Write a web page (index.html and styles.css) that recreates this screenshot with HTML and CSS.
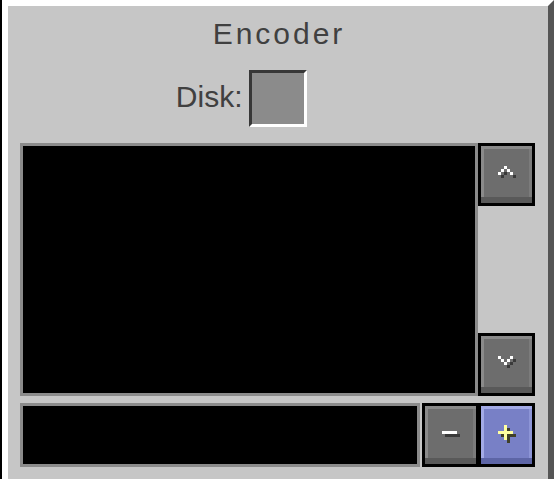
FILE: index.html
```html
<!DOCTYPE html>
<html lang="en">
<head>
<meta charset="utf-8">
<title>Encoder</title>
<link rel="stylesheet" href="styles.css">
</head>
<body>
<div class="frame">
  <div class="panel">
    <h1 class="title">Encoder</h1>
    <div class="disk-row">
      <span class="disk-label">Disk:</span>
      <div class="slot"></div>
      <span class="spacer"></span>
    </div>
    <div class="main">
      <div class="screen"></div>
      <div class="scroll">
        <button class="btn-outlined" aria-label="Scroll up">
          <svg class="icon" width="18" height="12" viewBox="0 0 6 4" shape-rendering="crispEdges">
            <g fill="#3a3a3a"><rect x="3" y="1" width="1" height="1"/><rect x="2" y="2" width="1" height="1"/><rect x="4" y="2" width="1" height="1"/><rect x="1" y="3" width="1" height="1"/><rect x="5" y="3" width="1" height="1"/></g>
            <g fill="#ffffff"><rect x="2" y="0" width="1" height="1"/><rect x="1" y="1" width="1" height="1"/><rect x="3" y="1" width="1" height="1"/><rect x="0" y="2" width="1" height="1"/><rect x="4" y="2" width="1" height="1"/></g>
          </svg>
        </button>
        <button class="btn-outlined" aria-label="Scroll down">
          <svg class="icon" width="18" height="12" viewBox="0 0 6 4" shape-rendering="crispEdges">
            <g fill="#3a3a3a"><rect x="1" y="1" width="1" height="1"/><rect x="5" y="1" width="1" height="1"/><rect x="2" y="2" width="1" height="1"/><rect x="4" y="2" width="1" height="1"/><rect x="3" y="3" width="1" height="1"/></g>
            <g fill="#ffffff"><rect x="0" y="0" width="1" height="1"/><rect x="4" y="0" width="1" height="1"/><rect x="1" y="1" width="1" height="1"/><rect x="3" y="1" width="1" height="1"/><rect x="2" y="2" width="1" height="1"/></g>
          </svg>
        </button>
      </div>
    </div>
    <div class="input-row">
      <div class="input"></div>
      <div class="btn-group">
        <button class="face" aria-label="Remove">
          <svg class="icon" width="18" height="6" viewBox="0 0 6 2" shape-rendering="crispEdges">
            <rect x="1" y="1" width="5" height="1" fill="#3a3a3a"/>
            <rect x="0" y="0" width="5" height="1" fill="#ffffff"/>
          </svg>
        </button>
        <button class="face face-active" aria-label="Add">
          <svg class="icon" width="18" height="18" viewBox="0 0 6 6" shape-rendering="crispEdges">
            <g fill="#3f3f28"><rect x="3" y="1" width="1" height="5"/><rect x="1" y="3" width="5" height="1"/></g>
            <g fill="#ffffa0"><rect x="2" y="0" width="1" height="5"/><rect x="0" y="2" width="5" height="1"/></g>
          </svg>
        </button>
      </div>
    </div>
  </div>
</div>
</body>
</html>
```

FILE: styles.css
```css
html, body {
  margin: 0;
  padding: 0;
  height: 100%;
  background: #c6c6c6;
  overflow: hidden;
}

.frame {
  height: 479px;
  box-sizing: border-box;
  border-left: 2px solid #000;
}

.panel {
  height: 100%;
  box-sizing: border-box;
  border-top: 6px solid #fff;
  border-left: 6px solid #fff;
  border-right: 6px solid #555;
  padding: 0 13px 0 12px;
  font-family: "Liberation Sans", Arial, sans-serif;
  color: #404040;
}

.title {
  margin: 13px 0 0;
  padding-left: 3px;
  font-size: 30px;
  line-height: 30px;
  font-weight: normal;
  letter-spacing: 3px;
  text-align: center;
}

.disk-row {
  display: grid;
  grid-template-columns: 1fr 58px 1fr;
  align-items: center;
  margin-top: 21px;
}

.disk-label {
  justify-self: end;
  margin-right: 6px;
  margin-bottom: 3px;
  font-size: 30px;
  line-height: 30px;
}

.slot {
  height: 57px;
  box-sizing: border-box;
  background: #8b8b8b;
  border: 3px solid;
  border-color: #373737 #fff #fff #373737;
}

.main {
  display: flex;
  margin-top: 16px;
  height: 253px;
}

.screen {
  width: 458px;
  box-sizing: border-box;
  border: 3px solid #8b8b8b;
  background: #000;
}

.scroll {
  width: 57px;
  display: flex;
  flex-direction: column;
  justify-content: space-between;
}

.btn-outlined,
.face {
  appearance: none;
  margin: 0;
  display: flex;
  align-items: center;
  justify-content: center;
  background: #6d6d6d;
  box-shadow: inset 0 -6px 0 #595959, inset 3px 3px 0 #8a8a8a, inset -3px 0 0 #7b7b7b;
  cursor: pointer;
  line-height: 0;
}

.btn-outlined {
  width: 57px;
  height: 63px;
  box-sizing: border-box;
  border: 3px solid #000;
  padding: 0 0 5px;
}

.icon {
  display: block;
}

.input-row {
  display: flex;
  gap: 2px;
  margin-top: 7px;
  height: 64px;
}

.input {
  width: 400px;
  box-sizing: border-box;
  border: 3px solid #8b8b8b;
  background: #000;
}

.btn-group {
  display: flex;
  gap: 5px;
  width: 113px;
  box-sizing: border-box;
  padding: 3px;
  background: #000;
}

.face {
  width: 51px;
  border: 0;
  padding: 0 0 2px;
}

.face-active {
  background: #7880c6;
  box-shadow: inset 0 -6px 0 #5d65a6, inset 3px 3px 0 #a3aae6, inset -3px 0 0 #8d95d6;
}
```
